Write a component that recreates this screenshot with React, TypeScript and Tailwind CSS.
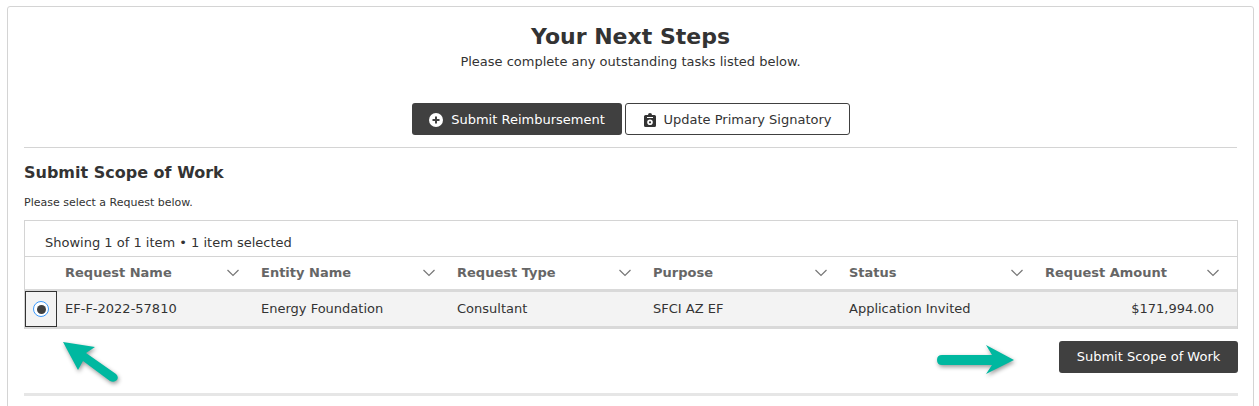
const font = "font-['DejaVu_Sans',Verdana,sans-serif]"

const columns = [
  { label: "Request Name", value: "EF-F-2022-57810" },
  { label: "Entity Name", value: "Energy Foundation" },
  { label: "Request Type", value: "Consultant" },
  { label: "Purpose", value: "SFCI AZ EF" },
  { label: "Status", value: "Application Invited" },
  { label: "Request Amount", value: "$171,994.00" },
]

function Chevron() {
  return (
    <svg width="14" height="8" viewBox="0 0 14 8" fill="none" stroke="#777777" strokeWidth="1.2">
      <path d="M1.500 1l5.500 5.500 5.500-5.500" />
    </svg>
  )
}

export default function App() {
  return (
    <div className={`${font} relative h-[406px] w-[1259px] overflow-hidden bg-white pl-[7px] pt-[6px] text-[#333333]`}>
      <div className="h-[420px] w-[1247px] rounded-tl-[3px] rounded-tr-[3px] border border-[#d4d4d4] px-4">
        <h1 className="mt-[15px] text-center text-[22px] font-bold leading-[30px]">Your Next Steps</h1>
        <p className="mt-[1px] text-center text-[13px] leading-[18px]">Please complete any outstanding tasks listed below.</p>

        <div className="mt-[32px] flex justify-center gap-[3px] pl-[1px]">
          <button className="flex h-[32px] w-[210px] items-center justify-center gap-2 rounded-[3px] bg-[#404040] pt-px text-[13px] text-white">
            <svg width="14" height="14" viewBox="0 0 14 14">
              <circle cx="7" cy="7" r="7" fill="#ffffff" />
              <path d="M7 3.500v7M3.500 7h7" stroke="#404040" strokeWidth="2" />
            </svg>
            Submit Reimbursement
          </button>
          <button className="flex h-[32px] w-[225px] items-center justify-center gap-[8px] rounded-[3px] border border-[#404040] bg-white pt-px text-[13px] text-[#333333]">
            <svg width="12" height="14" viewBox="0 0 12 14">
              <path fillRule="evenodd" fill="#333333" d="M1.500 2H4a2 2 0 0 1 4 0h2.500A1.500 1.500 0 0 1 12 3.500V12.500A1.500 1.500 0 0 1 10.500 14H1.500A1.500 1.500 0 0 1 0 12.500V3.500A1.500 1.500 0 0 1 1.500 2zM3 4v1h6V4zM6 6.500a2.800 2.800 0 1 0 0 5.600a2.800 2.800 0 0 0 0-5.600z" />
              <circle cx="6" cy="9.300" r="1.100" fill="#333333" />
            </svg>
            Update Primary Signatory
          </button>
        </div>

        <div className="mt-[12px] border-t border-[#d4d4d4]" />

        <h2 className="mt-[14px] text-[16px] font-bold leading-[22px]">Submit Scope of Work</h2>
        <p className="mt-[12px] text-[11px] leading-[14px]">Please select a Request below.</p>

        <div className="mt-[10px] w-[1214px] border border-[#d4d4d4] border-b-0">
          <div className="flex h-[36px] items-end border-b border-[#d4d4d4] pb-[5px] pl-[20px] text-[13px] leading-[16px]">
            Showing 1 of 1 item • 1 item selected
          </div>
          <div className="flex h-[35px] items-center border-b-[3px] border-[#d9d9d9] pl-[40px]">
            {columns.map((c) => (
              <div key={c.label} className="flex w-[196px] shrink-0 items-center justify-between pr-[21px] text-[13px] font-bold text-[#666666]">
                {c.label}
                <Chevron />
              </div>
            ))}
          </div>
          <div className="flex h-[37px] items-center border-b-[3px] border-[#d9d9d9] bg-[#f3f3f3]">
            <div className="flex h-[36px] w-[32px] shrink-0 items-center justify-center border border-[#333333]">
              <span className="flex h-[16px] w-[16px] items-center justify-center rounded-full border-[1.5px] border-[#3b99fc] bg-white">
                <span className="h-[9px] w-[9px] rounded-full bg-[#404040]" />
              </span>
            </div>
            <div className="flex pl-[8px] text-[13px]">
              {columns.map((c, i) => (
                <div key={c.label} className={i === 5 ? "w-[169px] shrink-0 text-right" : "w-[196px] shrink-0"}>{c.value}</div>
              ))}
            </div>
          </div>
        </div>

        <div className="mt-[12px] flex w-[1214px] justify-end">
          <button className="h-[32px] w-[179px] rounded-[3px] bg-[#404040] text-[13px] text-white">Submit Scope of Work</button>
        </div>
        <div className="mt-[20px] h-[3px] w-[1214px] bg-[#e6e6e6]" />
      </div>

      <svg className="absolute left-[60px] top-[338px] drop-shadow-[1px_2px_2px_rgba(0,0,0,0.4)]" width="62" height="48" viewBox="0 0 62 48">
        <path fill="#00b8a0" d="M3 4L35 9 26 15 56 36Q59 39 57 42 54 45 50 43L23 23 18 32z" />
      </svg>
      <svg className="absolute left-[934px] top-[342px] drop-shadow-[1px_2px_2px_rgba(0,0,0,0.4)]" width="86" height="36" viewBox="0 0 86 36">
        <path fill="#00b8a0" d="M8 13H58L52 3 80 18 52 32 58 23H8Q3 23 3 18 3 13 8 13z" />
      </svg>
    </div>
  )
}
